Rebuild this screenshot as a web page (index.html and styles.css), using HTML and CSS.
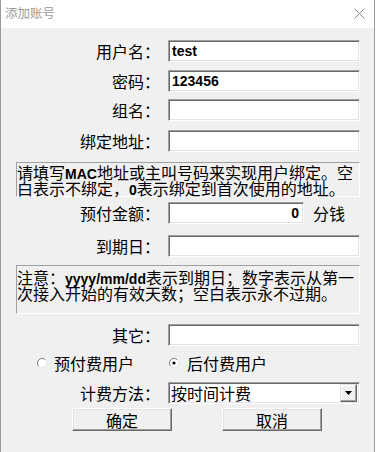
FILE: index.html
```html
<!DOCTYPE html>
<html lang="zh-CN">
<head>
<meta charset="utf-8">
<title>添加账号</title>
<link rel="stylesheet" href="styles.css">
</head>
<body>
<div class="window">
  <div class="titlebar">
    <span class="title">添加账号</span>
    <svg class="close" width="11" height="11" viewBox="0 0 11 11"><path d="M0.5 0.5 L10.5 10.5 M10.5 0.5 L0.5 10.5" stroke="#8a8a8a" stroke-width="1" fill="none"/></svg>
  </div>
  <div class="client">
    <div class="row r1"><span class="lbl">用户名：</span><div class="edit">test</div></div>
    <div class="row r2"><span class="lbl">密码：</span><div class="edit">123456</div></div>
    <div class="row r3"><span class="lbl">组名：</span><div class="edit"></div></div>
    <div class="row r4"><span class="lbl">绑定地址：</span><div class="edit"></div></div>
    <div class="note n1">
      <div class="line">请填写<b>MAC</b>地址或主叫号码来实现用户绑定。空</div>
      <div class="line">白表示不绑定，<b>0</b>表示绑定到首次使用的地址。</div>
    </div>
    <div class="row r5"><span class="lbl">预付金额：</span><div class="edit short">0</div><span class="unit">分钱</span></div>
    <div class="row r6"><span class="lbl">到期日：</span><div class="edit"></div></div>
    <div class="note n2">
      <div class="line">注意：<b>yyyy/mm/dd</b>表示到期日；数字表示从第一</div>
      <div class="line">次接入开始的有效天数；空白表示永不过期。</div>
    </div>
    <div class="row r7"><span class="lbl">其它：</span><div class="edit"></div></div>
    <div class="radios">
      <div class="radio first">
        <svg width="10" height="10" viewBox="0 0 10 10"><circle cx="5" cy="5" r="4.5" fill="#fff"/><path d="M1.8 8.2 A4.5 4.5 0 0 1 8.2 1.8" stroke="#7a7a7a" fill="none"/><path d="M8.2 1.8 A4.5 4.5 0 0 1 1.8 8.2" stroke="#e6e6e6" fill="none"/></svg>
        <span>预付费用户</span>
      </div>
      <div class="radio">
        <svg width="10" height="10" viewBox="0 0 10 10"><circle cx="5" cy="5" r="4.5" fill="#fff"/><path d="M1.8 8.2 A4.5 4.5 0 0 1 8.2 1.8" stroke="#7a7a7a" fill="none"/><path d="M8.2 1.8 A4.5 4.5 0 0 1 1.8 8.2" stroke="#e6e6e6" fill="none"/><circle cx="5" cy="5" r="1.6" fill="#000"/></svg>
        <span>后付费用户</span>
      </div>
    </div>
    <div class="row r8"><span class="lbl">计费方法：</span>
      <div class="combo"><span class="ctext">按时间计费</span>
        <span class="dd"><svg width="7" height="4" viewBox="0 0 7 4"><path d="M0 0 H7 L3.5 4 Z" fill="#000"/></svg></span>
      </div>
    </div>
    <div class="buttons">
      <button class="btn">确定</button>
      <button class="btn">取消</button>
    </div>
  </div>
</div>
</body>
</html>
```
FILE: styles.css
```css
* { box-sizing: border-box; }
html, body { margin: 0; padding: 0; }
body {
  width: 379px;
  height: 452px;
  overflow: hidden;
  background: #ffffff;
  font-family: "Noto Sans CJK SC", sans-serif;
  color: #000;
}
.window {
  width: 375px;
  height: 452px;
  border-left: 1px solid #9a9a9a;
  border-right: 1px solid #9a9a9a;
  display: flex;
  flex-direction: column;
}
.titlebar {
  height: 28px;
  flex: none;
  background: #fff;
  display: flex;
  align-items: center;
  justify-content: space-between;
  padding: 0 9px 0 4px;
}
.title {
  font-size: 12.5px;
  line-height: 1;
  color: #9a9a9a;
  margin-top: -1px;
}
.close { display: block; margin-top: -1px; }
.client {
  flex: 1;
  background: #f0f0f0;
  display: flex;
  flex-direction: column;
}
.row {
  display: flex;
  align-items: center;
  height: 22px;
  flex: none;
}
.lbl {
  width: 159px;
  margin-right: 8px;
  text-align: right;
  font-size: 16px;
  line-height: 22px;
  white-space: nowrap;
}
.edit {
  width: 192px;
  height: 22px;
  background: #fff;
  border: 1px solid;
  border-color: #a0a0a0 #ffffff #ffffff #a0a0a0;
  box-shadow: inset 1px 1px 0 #696969, inset -1px -1px 0 #e3e3e3;
  font: bold 14px "Liberation Sans", Arial, sans-serif;
  line-height: 20px;
  padding: 0 3px;
  white-space: nowrap;
}
.edit.short {
  width: 136px;
  text-align: right;
  padding-right: 4px;
}
.unit {
  margin-left: 9px;
  font-size: 16px;
  line-height: 22px;
}
.r1 { margin-top: 12px; }
.r2 { margin-top: 8px; }
.r3 { margin-top: 7px; }
.r4 { margin-top: 9px; }
.n1 { margin-top: 10px; height: 35px; padding-top: 1px; }
.r5 { margin-top: 5px; }
.r6 { margin-top: 11px; }
.n2 { margin-top: 8px; height: 49px; padding-top: 3px; }
.r7 { margin-top: 10px; }
.note {
  flex: none;
  margin-left: 15px;
  width: 344px;
  border: 1px solid;
  border-color: #a0a0a0 #ffffff #ffffff #a0a0a0;
  font-size: 16px;
  white-space: nowrap;
}
.line {
  height: 16px;
  line-height: 16px;
}
.note b {
  font: bold 14px "Liberation Sans", Arial, sans-serif;
  line-height: 16px;
}
.radios {
  flex: none;
  display: flex;
  align-items: center;
  height: 20px;
  margin-top: 7px;
  padding-left: 36px;
}
.radio {
  display: flex;
  align-items: center;
  gap: 8px;
  font-size: 16px;
  line-height: 20px;
}
.radio svg { display: block; }
.radio.first { width: 132px; gap: 7px; }
.r8 { margin-top: 9px; }
.combo {
  width: 192px;
  height: 22px;
  background: #fff;
  border: 1px solid;
  border-color: #a0a0a0 #ffffff #ffffff #a0a0a0;
  box-shadow: inset 1px 1px 0 #696969, inset -1px -1px 0 #e3e3e3;
  display: flex;
  align-items: center;
  padding: 2px;
}
.ctext {
  font-size: 16px;
  line-height: 18px;
  flex: 1;
  white-space: nowrap;
}
.dd {
  width: 17px;
  height: 18px;
  background: #f0f0f0;
  border: 1px solid;
  border-color: #e3e3e3 #696969 #696969 #e3e3e3;
  box-shadow: inset -1px -1px 0 #a0a0a0, inset 1px 1px 0 #fff;
  display: flex;
  align-items: center;
  justify-content: center;
}
.dd svg { display: block; }
.buttons {
  flex: none;
  display: flex;
  gap: 50px;
  padding-left: 71px;
  margin-top: 4px;
}
.btn {
  width: 100px;
  height: 23px;
  padding: 0;
  margin: 0;
  background: #f0f0f0;
  border: 1px solid;
  border-color: #ffffff #696969 #696969 #ffffff;
  box-shadow: inset -1px -1px 0 #a0a0a0, inset 1px 1px 0 #e3e3e3;
  font-family: "Noto Sans CJK SC", sans-serif;
  font-size: 16px;
  line-height: 20px;
  color: #000;
}
```
